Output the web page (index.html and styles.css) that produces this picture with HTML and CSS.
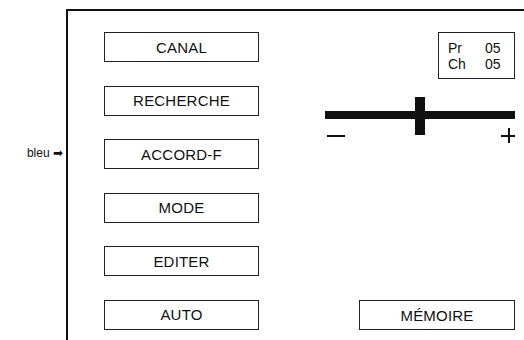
FILE: index.html
```html
<!DOCTYPE html>
<html lang="fr">
<head>
  <meta charset="UTF-8">
  <title>Réglage des chaînes</title>
  <link rel="stylesheet" href="styles.css">
</head>
<body>
  <div class="page">
    <div class="side">
      <span class="note">bleu <span class="arrow">&#x27A1;</span></span>
    </div>

    <div class="panel">
      <div class="menu">
        <div class="btn">CANAL</div>
        <div class="btn">RECHERCHE</div>
        <div class="btn">ACCORD-F</div>
        <div class="btn">MODE</div>
        <div class="btn">EDITER</div>
        <div class="btn">AUTO</div>
      </div>

      <div class="right">
        <div class="info">
          <span>Pr</span><span>05</span>
          <span>Ch</span><span>05</span>
        </div>

        <svg class="slider" width="190" height="46" viewBox="0 0 190 46">
          <rect x="0" y="14" width="190" height="8" fill="#111"/>
          <rect x="90" y="0" width="10" height="38" fill="#111"/>
          <rect x="2" y="38" width="18" height="2" fill="#111"/>
          <rect x="176" y="38" width="16" height="2" fill="#111"/>
          <rect x="183" y="31" width="2" height="16" fill="#111"/>
        </svg>

        <div class="btn memo">MÉMOIRE</div>
      </div>
    </div>
  </div>
</body>
</html>
```

FILE: styles.css
```css
body {
  margin: 0;
  background-color: #fff;
  color: #111;
  font-family: "Liberation Sans", Arial, sans-serif;
}
.page {
  display: flex;
  height: 340px;
  padding-top: 9px;
  box-sizing: border-box;
}
.side {
  width: 66px;
  display: flex;
  align-items: flex-start;
  justify-content: flex-end;
  padding-top: 137px;
  box-sizing: border-box;
}
.note {
  font-size: 12px;
  line-height: 14px;
  margin-right: 3px;
  white-space: nowrap;
}
.arrow {
  font-size: 12px;
  font-family: "DejaVu Sans", sans-serif;
}
.panel {
  flex: 1;
  display: flex;
  border-top: 2px solid #111;
  border-left: 2px solid #111;
  padding: 21px 9px 0 36px;
}
.menu {
  display: flex;
  flex-direction: column;
  gap: 23.6px;
  width: 155px;
}
.btn {
  height: 30px;
  box-sizing: border-box;
  border: 1.5px solid #222;
  display: flex;
  align-items: center;
  justify-content: center;
  font-size: 15px;
  letter-spacing: 0.2px;
}
.right {
  flex: 1;
  margin-left: 66px;
  display: flex;
  flex-direction: column;
  align-items: flex-end;
}
.info {
  width: 77px;
  height: 47px;
  box-sizing: border-box;
  border: 1.5px solid #222;
  display: grid;
  grid-template-columns: 37px auto;
  align-content: center;
  padding-left: 9px;
  font-size: 14px;
  line-height: 16px;
}
.slider {
  display: block;
  margin-top: 18px;
}
.memo {
  margin-top: auto;
  margin-bottom: 10px;
  width: 156px;
}
```
